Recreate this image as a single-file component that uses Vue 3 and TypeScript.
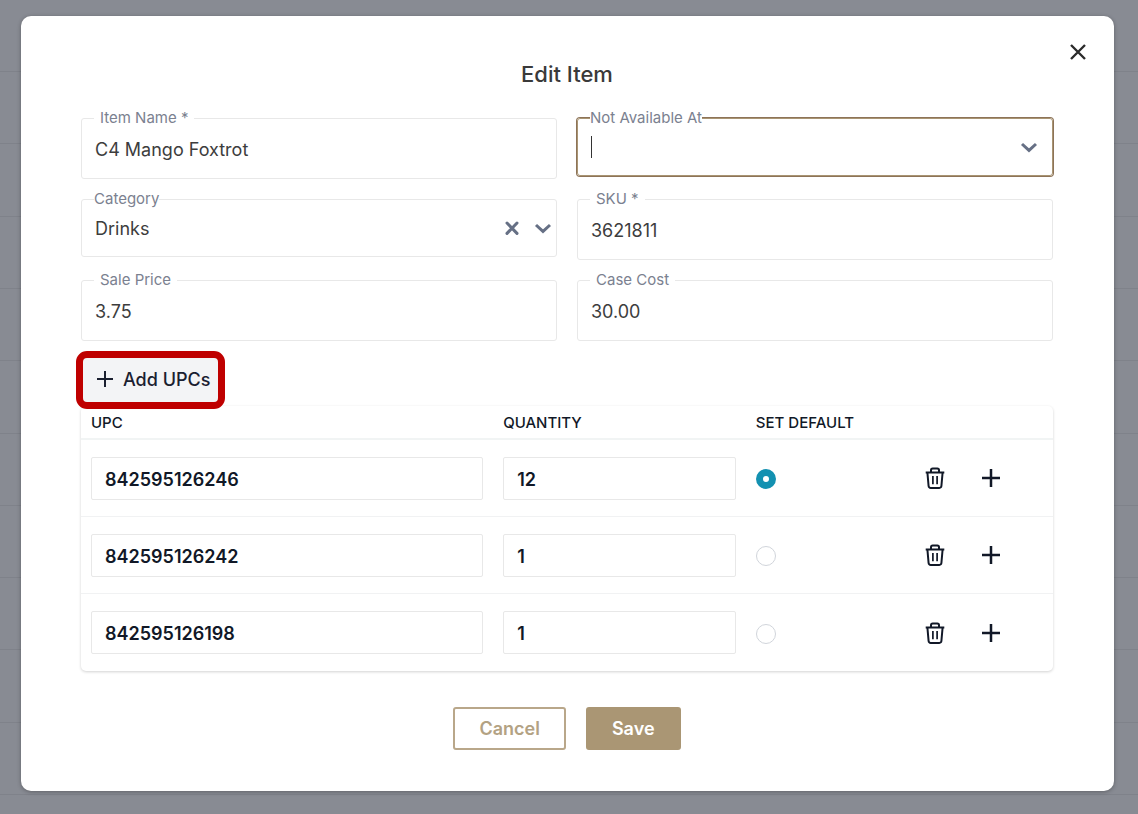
<script setup lang="ts">
import { reactive, ref } from 'vue'

interface UpcRow {
  id: number
  code: string
  quantity: string
}

const form = reactive({
  name: 'C4 Mango Foxtrot',
  notAvailable: '',
  category: 'Drinks',
  sku: '3621811',
  salePrice: '3.75',
  caseCost: '30.00',
})

let nextId = 4
const rows = ref<UpcRow[]>([
  { id: 1, code: '842595126246', quantity: '12' },
  { id: 2, code: '842595126242', quantity: '1' },
  { id: 3, code: '842595126198', quantity: '1' },
])
const defaultRow = ref(1)

function addRow(after: number = rows.value.length - 1): void {
  rows.value.splice(after + 1, 0, { id: nextId++, code: '', quantity: '1' })
}

function removeRow(id: number): void {
  rows.value = rows.value.filter((row) => row.id !== id)
}
</script>

<template>
  <div class="page">
    <div class="backdrop" aria-hidden="true">
      <div v-for="n in 12" :key="n" class="backdrop-row"></div>
    </div>

    <form class="modal" role="dialog" aria-labelledby="dialog-title" @submit.prevent>
      <button type="button" class="icon-button close" aria-label="Close">
        <svg width="16" height="16" viewBox="0 0 16 16"><path stroke-width="2.4" d="M1 1 15 15M15 1 1 15" /></svg>
      </button>

      <h1 id="dialog-title" class="title">Edit Item</h1>

      <div class="fields">
        <div class="field">
          <label for="item-name">Item Name *</label>
          <input id="item-name" v-model="form.name" type="text" />
        </div>

        <div class="field tight short focused">
          <label for="not-available">Not Available At</label>
          <span v-if="!form.notAvailable" class="caret"></span>
          <input id="not-available" v-model="form.notAvailable" type="text" role="combobox" aria-expanded="false" />
          <svg class="chevron" width="18" height="18" viewBox="0 0 18 18"><path d="M2 6 9 12.400 16 6" /></svg>
        </div>

        <div class="field tight short">
          <label for="category">Category</label>
          <select id="category" v-model="form.category">
            <option value=""></option>
            <option value="Drinks">Drinks</option>
          </select>
          <button type="button" class="icon-button clear" aria-label="Clear category" @click="form.category = ''">
            <svg width="14" height="14" viewBox="0 0 14 14"><path stroke-linecap="round" d="M2 2 12 12.400M12 2 2 12.400" /></svg>
          </button>
          <svg class="chevron" width="18" height="18" viewBox="0 0 18 18"><path d="M2 6 9 12.400 16 6" /></svg>
        </div>

        <div class="field">
          <label for="sku">SKU *</label>
          <input id="sku" v-model="form.sku" type="text" />
        </div>

        <div class="field">
          <label for="sale-price">Sale Price</label>
          <input id="sale-price" v-model="form.salePrice" type="text" />
        </div>

        <div class="field">
          <label for="case-cost">Case Cost</label>
          <input id="case-cost" v-model="form.caseCost" type="text" />
        </div>
      </div>

      <button type="button" class="add-upcs" @click="addRow()">
        <svg width="18" height="18" viewBox="0 0 18 18"><path d="M9 1V17M1 9H17" /></svg>
        Add UPCs
      </button>

      <div class="card">
        <table>
          <colgroup>
            <col class="col-upc" />
            <col class="col-quantity" />
            <col class="col-default" />
            <col />
          </colgroup>
          <thead>
            <tr>
              <th scope="col">UPC</th>
              <th scope="col">QUANTITY</th>
              <th scope="col">SET DEFAULT</th>
              <td></td>
            </tr>
          </thead>
          <tbody>
            <tr v-for="(row, index) in rows" :key="row.id">
              <td><input v-model="row.code" class="cell-input" type="text" aria-label="UPC" /></td>
              <td><input v-model="row.quantity" class="cell-input" type="text" aria-label="Quantity" /></td>
              <td>
                <input v-model="defaultRow" class="radio" type="radio" name="default-upc" :value="row.id" aria-label="Set default" />
              </td>
              <td>
                <div class="actions">
                  <button type="button" class="icon-button" aria-label="Delete UPC" @click="removeRow(row.id)">
                    <svg width="20" height="22" viewBox="0 0 20 22">
                      <path d="M.7 5.500H19.300M2.400 5.500 3.600 19Q3.800 20.900 5.700 20.900H14.300Q16.200 20.900 16.400 19L17.600 5.500M6 5.200V3.200Q6 1.500 7.700 1.500H12.300Q14 1.500 14 3.200V5.200" />
                      <path stroke-width="1.700" d="M7.900 9V17.200M12.100 9V17.200" />
                    </svg>
                  </button>
                  <button type="button" class="icon-button" aria-label="Add UPC" @click="addRow(index)">
                    <svg width="18" height="18" viewBox="0 0 18 18"><path stroke-width="2.500" d="M9 0V18M0 9H18" /></svg>
                  </button>
                </div>
              </td>
            </tr>
          </tbody>
        </table>
      </div>

      <div class="footer">
        <button type="button" class="button outline">Cancel</button>
        <button type="submit" class="button solid">Save</button>
      </div>
    </form>
  </div>
</template>

<style>
body {
  background: #888b93;
}
</style>

<style scoped>
.page,
.page * {
  box-sizing: border-box;
}

.page {
  position: relative;
  min-height: 100vh;
  padding: 16px 24px 23px 21px;
  font-family: Inter, 'Liberation Sans', sans-serif;
  color: #3d3d3d;
}

button,
input,
select {
  font: inherit;
  color: inherit;
}

svg {
  display: block;
  fill: none;
  stroke: currentColor;
  stroke-width: 2;
}

.backdrop {
  position: absolute;
  inset: 0;
  display: grid;
  grid-template-rows: 72px repeat(10, 1fr) 19px;
  background: #888b93;
}

.backdrop-row {
  border-bottom: 1px solid #7f828a;
}

.backdrop-row:last-child {
  border-bottom: 0;
}

.modal {
  position: relative;
  padding: 42px 61px 41px 60px;
  border-radius: 10px;
  background: #fff;
  box-shadow: 0 1px 4px rgba(0, 0, 0, 0.3);
}

.icon-button {
  display: flex;
  align-items: center;
  justify-content: center;
  padding: 0;
  border: 0;
  background: none;
  cursor: pointer;
}

.close {
  position: absolute;
  top: 20px;
  right: 20px;
  width: 32px;
  height: 32px;
  color: #2b2b2b;
}

.title {
  margin: 0 0 28px;
  font-size: 22px;
  line-height: 32px;
  font-weight: 500;
  text-align: center;
  color: #3a3a3a;
}

.fields {
  display: grid;
  grid-template-columns: 1fr 1fr;
  grid-auto-rows: 61px;
  column-gap: 20px;
  row-gap: 20px;
  align-items: start;
}

.field {
  position: relative;
  display: flex;
  align-items: center;
  height: 61px;
  padding: 2px 4px 0 13px;
  border: 1px solid #e8e8e8;
  border-radius: 3px;
  font-size: 18px;
}

.field label {
  position: absolute;
  top: -11px;
  left: 12px;
  padding: 0 6px;
  background: #fff;
  font-size: 15px;
  line-height: 20px;
  color: #7b8190;
}

.field.tight label {
  padding: 0;
}

.field.short {
  height: 58px;
  padding-top: 0;
}

.field.focused {
  padding-right: 14px;
  border-color: #a99573;
  box-shadow: 0 0 0 1px #8d7358;
}

.field input,
.field select {
  flex: 1;
  min-width: 0;
  height: 32px;
  padding: 0;
  border: 0;
  outline: 0;
  background: none;
  appearance: none;
}

.caret {
  width: 1px;
  height: 22px;
  background: #333;
}

.focused input {
  caret-color: transparent;
}

.clear {
  margin-right: 15px;
}

.clear,
.chevron {
  flex: none;
  color: #667085;
}

.clear svg,
.chevron {
  stroke-width: 3;
}

.add-upcs {
  position: relative;
  display: flex;
  align-items: center;
  gap: 9px;
  height: 58px;
  margin: 10px 0 -3px -5px;
  padding: 0 8px 2px 13px;
  border: 7px solid #bf0000;
  border-radius: 11px;
  background: #f3f4f6;
  font-size: 18px;
  font-weight: 500;
  color: #1a2030;
  cursor: pointer;
}

.card {
  border-radius: 5px;
  box-shadow: 0 1px 3px rgba(0, 0, 0, 0.18);
}

table {
  width: 100%;
  table-layout: fixed;
  border-collapse: separate;
  border-spacing: 0;
  color: #111827;
}

.col-upc {
  width: 42.4%;
}

.col-quantity {
  width: 26%;
}

.col-default {
  width: 16.6%;
}

th,
td {
  padding: 0 10px;
  text-align: left;
}

thead th,
thead td {
  height: 34px;
  border-bottom: 2px solid #f1f4f4;
  font-size: 15px;
  font-weight: 500;
}

tbody td {
  height: 77px;
  border-bottom: 1px solid #f1f2f3;
}

tbody tr:last-child td {
  border-bottom: 0;
}

.cell-input {
  display: block;
  width: 100%;
  height: 43px;
  padding: 2px 13px 0;
  border: 1px solid #e8e8e8;
  border-radius: 2px;
  font-size: 18px;
  font-weight: 600;
}

.radio {
  display: block;
  width: 20px;
  height: 20px;
  margin: 2px 0 0;
  border: 1px solid #d1d5db;
  border-radius: 50%;
  background: #fff;
  appearance: none;
}

.radio:checked {
  border: 7px solid #1391b1;
}

.actions {
  display: flex;
  align-items: center;
  gap: 37px;
  padding-left: 8px;
}

.footer {
  display: flex;
  justify-content: center;
  gap: 20px;
  margin-top: 36px;
}

.button {
  height: 43px;
  padding: 0 24px;
  border: 2px solid #b9a78a;
  border-radius: 3px;
  font-size: 18px;
  font-weight: 600;
  cursor: pointer;
}

.outline {
  background: #fff;
  color: #b3a283;
}

.solid {
  border-color: #aa9674;
  background: #aa9674;
  color: #fff;
}
</style>
